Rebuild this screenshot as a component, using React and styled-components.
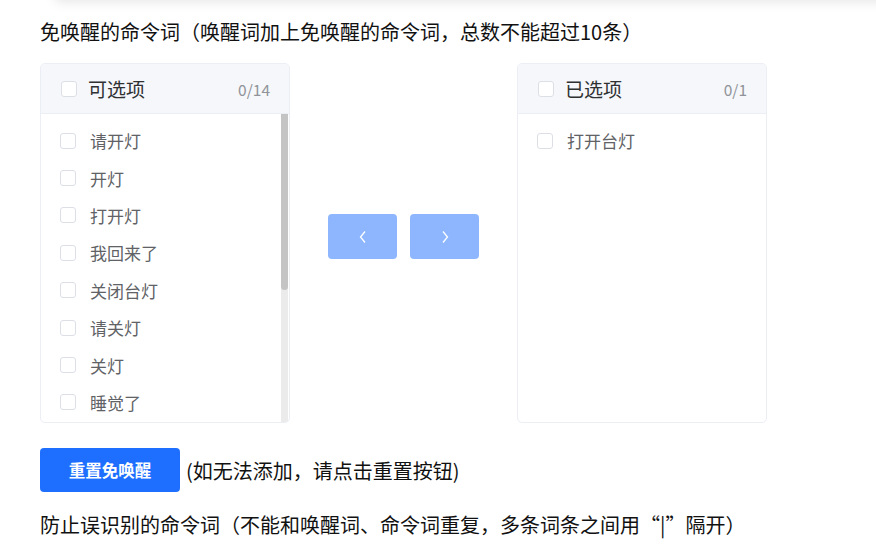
import React from "react";
import styled, { createGlobalStyle } from "styled-components";

const Global = createGlobalStyle`
  html, body { margin: 0; padding: 0; background: #fff; }
  body { font-family: "Noto Sans CJK SC", "Noto Sans", sans-serif; overflow: hidden; }
  * { box-sizing: border-box; }
`;

const Page = styled.div`
  width: 876px;
  height: 556px;
  padding-left: 40px;
  overflow: hidden;
`;

const TopCard = styled.div`
  height: 20px;
  margin-top: -20px;
  margin-left: 15px;
  margin-right: -60px;
  background: #fff;
  box-shadow: 0 2px 12px rgba(0, 0, 0, 0.1);
`;

const Title = styled.div`
  margin-top: 20px;
  font-size: 20px;
  line-height: 24px;
  color: #111;
`;

const Transfer = styled.div`
  margin-top: 19px;
  display: flex;
  align-items: flex-start;
`;

const Panel = styled.div`
  width: 250px;
  height: 360px;
  border: 1px solid #ebeef5;
  border-radius: 5px;
  overflow: hidden;
  display: flex;
  flex-direction: column;
  background: #fff;
`;

const Header = styled.div`
  height: 50px;
  flex: none;
  background: #f5f7fa;
  border-bottom: 1px solid #ebeef5;
  display: flex;
  align-items: center;
  padding: 0 19px 0 20px;
`;

const HeaderLabel = styled.span`
  margin-left: 11px;
  font-size: 19px;
  color: #303133;
  flex: 1;
`;

const Count = styled.span`
  font-size: 15.5px;
  color: #909399;
`;

const Box = styled.span`
  width: 16px;
  height: 16px;
  flex: none;
  border: 1px solid #dcdfe6;
  border-radius: 3px;
  background: #fff;
`;

const Body = styled.div`
  flex: 1;
  min-height: 0;
  display: flex;
`;

const List = styled.div`
  flex: 1;
  overflow: hidden;
  padding: 8px 0 8px;
`;

const Track = styled.div`
  width: 7px;
  flex: none;
  margin-right: 1px;
  background: #ebebeb;
`;

const Thumb = styled.div`
  height: 176px;
  background: #c4c4c4;
  border-radius: 0 0 4px 4px;
`;

const Item = styled.div`
  height: 37.4px;
  display: flex;
  align-items: center;
  padding-left: 19px;
`;

const ItemLabel = styled.span`
  margin-left: 14px;
  font-size: 17px;
  color: #606266;
  white-space: nowrap;
`;

const Buttons = styled.div`
  display: flex;
  gap: 13px;
  margin: 151px 38px 0;
`;

const ArrowBtn = styled.div`
  width: 69px;
  height: 45px;
  background: #8db6ff;
  border-radius: 4px;
  display: flex;
  align-items: center;
  justify-content: center;
`;

const Row = styled.div`
  margin-top: 25px;
  display: flex;
  align-items: center;
`;

const ResetBtn = styled.div`
  width: 140px;
  height: 44px;
  background: #1e6fff;
  border-radius: 4px;
  color: #fff;
  font-size: 16.5px;
  font-weight: 700;
  display: flex;
  align-items: center;
  justify-content: center;
`;

const Hint = styled.span`
  margin-left: 6px;
  font-size: 20px;
  color: #111;
`;

const Bottom = styled.div`
  margin-top: 21px;
  font-size: 20px;
  line-height: 24px;
  color: #111;
  white-space: nowrap;
`;

const Chevron = ({ dir }) => (
  <svg width="10" height="14" viewBox="0 0 10 14">
    <path
      d={dir === "left" ? "M7 1.5 L2.5 7 L7 12.5" : "M3 1.5 L7.5 7 L3 12.5"}
      fill="none"
      stroke="#fff"
      strokeWidth="1.3"
    />
  </svg>
);

const left = ["请开灯", "开灯", "打开灯", "我回来了", "关闭台灯", "请关灯", "关灯", "睡觉了"];

export default function App() {
  return (
    <Page>
      <Global />
      <TopCard />
      <Title>免唤醒的命令词（唤醒词加上免唤醒的命令词，总数不能超过10条）</Title>
      <Transfer>
        <Panel>
          <Header>
            <Box />
            <HeaderLabel>可选项</HeaderLabel>
            <Count>0/14</Count>
          </Header>
          <Body>
            <List>
              {left.map((t) => (
                <Item key={t}>
                  <Box />
                  <ItemLabel>{t}</ItemLabel>
                </Item>
              ))}
            </List>
            <Track>
              <Thumb />
            </Track>
          </Body>
        </Panel>
        <Buttons>
          <ArrowBtn><Chevron dir="left" /></ArrowBtn>
          <ArrowBtn><Chevron dir="right" /></ArrowBtn>
        </Buttons>
        <Panel>
          <Header>
            <Box />
            <HeaderLabel>已选项</HeaderLabel>
            <Count>0/1</Count>
          </Header>
          <List>
            <Item>
              <Box />
              <ItemLabel>打开台灯</ItemLabel>
            </Item>
          </List>
        </Panel>
      </Transfer>
      <Row>
        <ResetBtn>重置免唤醒</ResetBtn>
        <Hint>(如无法添加，请点击重置按钮)</Hint>
      </Row>
      <Bottom>防止误识别的命令词（不能和唤醒词、命令词重复，多条词条之间用“|”隔开）</Bottom>
    </Page>
  );
}
